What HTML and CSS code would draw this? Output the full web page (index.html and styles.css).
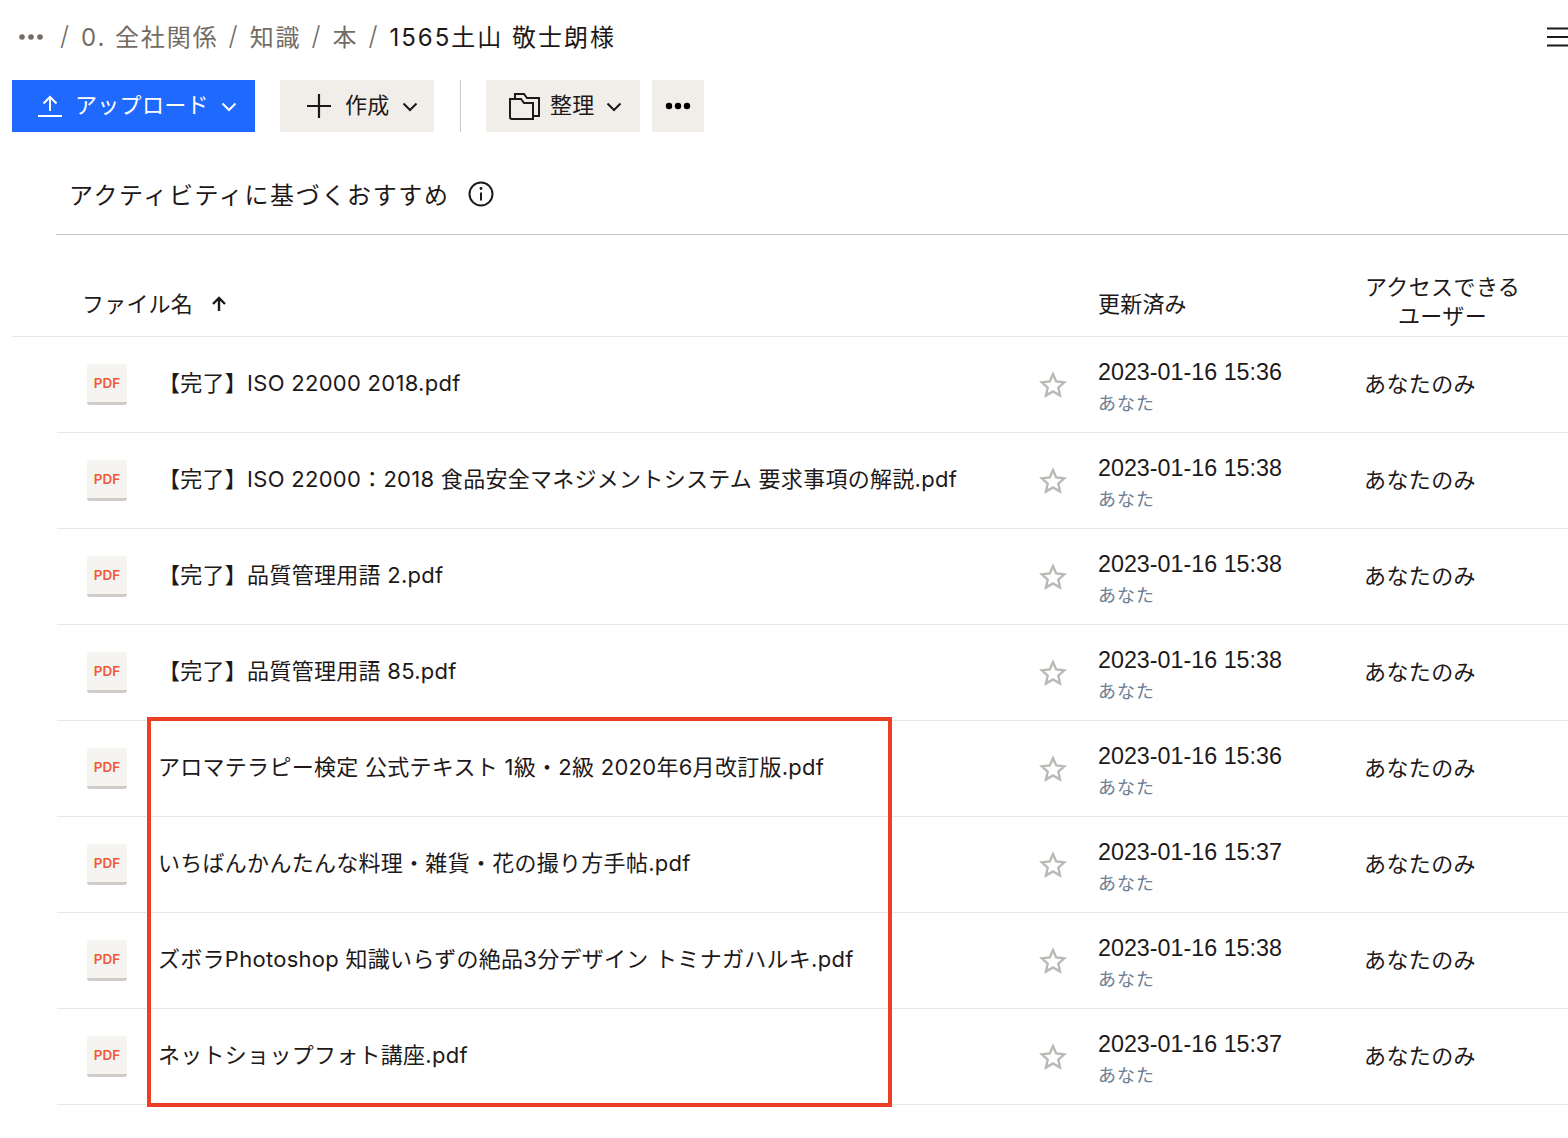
FILE: index.html
```html
<!DOCTYPE html>
<html lang="ja">
<head>
<meta charset="utf-8">
<title>1565土山 敬士朗様</title>
<link rel="stylesheet" href="styles.css">
</head>
<body>
<div class="page">
  <header class="crumbs">
    <svg class="crumb-more" width="28" height="8" viewBox="0 0 28 8"><circle cx="5" cy="4" r="2.800"/><circle cx="14" cy="4" r="2.800"/><circle cx="23" cy="4" r="2.800"/></svg>
    <span class="sep">/</span><span class="crumb">0. 全社関係</span>
    <span class="sep">/</span><span class="crumb">知識</span>
    <span class="sep">/</span><span class="crumb">本</span>
    <span class="sep">/</span><span class="crumb current">1565土山 敬士朗様</span>
    <svg class="menu" width="21" height="20" viewBox="0 0 21 20"><path d="M0 1.500h21M0 10h21M0 18.500h21" stroke="#1e1919" stroke-width="2"/></svg>
  </header>

  <nav class="toolbar">
    <button class="btn primary upload">
      <svg width="26" height="24" viewBox="0 0 26 24" fill="none" stroke="#fff" stroke-width="2"><path d="M13 17V3M6.500 9.500 13 3l6.500 6.500M1 22h24"/></svg>
      <span>アップロード</span>
      <svg class="chev" width="16" height="10" viewBox="0 0 16 10" fill="none" stroke="#fff" stroke-width="2"><path d="m1.500 1.500 6.500 6.500 6.500-6.500"/></svg>
    </button>
    <button class="btn create">
      <svg width="26" height="26" viewBox="0 0 26 26" fill="none" stroke="#1e1919" stroke-width="2.200"><path d="M13 1v24M1 13h24"/></svg>
      <span>作成</span>
      <svg class="chev" width="16" height="10" viewBox="0 0 16 10" fill="none" stroke="#1e1919" stroke-width="2"><path d="m1.500 1.500 6.500 6.500 6.500-6.500"/></svg>
    </button>
    <div class="divider"></div>
    <button class="btn organize">
      <svg width="32" height="28" viewBox="0 0 32 28" fill="none" stroke="#1e1919" stroke-width="2"><path d="M7 7V2h9l3 4h12v18h-6"/><path d="M2 7h11l3 4h9v16H4a2 2 0 0 1-2-2z"/></svg>
      <span>整理</span>
      <svg class="chev" width="16" height="10" viewBox="0 0 16 10" fill="none" stroke="#1e1919" stroke-width="2"><path d="m1.500 1.500 6.500 6.500 6.500-6.500"/></svg>
    </button>
    <button class="btn more">
      <svg width="28" height="8" viewBox="0 0 28 8"><circle cx="5" cy="4" r="3.200"/><circle cx="14" cy="4" r="3.200"/><circle cx="23" cy="4" r="3.200"/></svg>
    </button>
  </nav>

  <section class="suggest">
    <span>アクティビティに基づくおすすめ</span>
    <svg class="info" width="26" height="26" viewBox="0 0 26 26" fill="none" stroke="#1e1919" stroke-width="2"><circle cx="13" cy="13" r="11.500"/><path d="M13 11.500v8"/><circle cx="13" cy="7.500" r="1.400" fill="#1e1919" stroke="none"/></svg>
  </section>

  <div class="thead">
    <div class="th-name">ファイル名
      <svg class="sort" width="16" height="16" viewBox="0 0 16 16" fill="none" stroke="#1e1919" stroke-width="2.400"><path d="M8 15V2M2 8l6-6 6 6"/></svg>
    </div>
    <div class="th-date">更新済み</div>
    <div class="th-access">アクセスできる<br>ユーザー</div>
  </div>

  <main class="rows">
    <div class="row">
      <div class="pdf"><span>PDF</span></div>
      <div class="name">【完了】ISO 22000 2018.pdf</div>
      <svg class="star" width="28" height="28" viewBox="0 0 28 28"><path d="M14 3.200l3.300 7.300 7.900.8-5.900 5.400 1.700 7.800-7-4-7 4 1.700-7.800-5.900-5.400 7.900-.8z"/></svg>
      <div class="date"><div>2023-01-16 15:36</div><div class="who">あなた</div></div>
      <div class="access">あなたのみ</div>
    </div>
    <div class="row">
      <div class="pdf"><span>PDF</span></div>
      <div class="name">【完了】ISO 22000：2018 食品安全マネジメントシステム 要求事項の解説.pdf</div>
      <svg class="star" width="28" height="28" viewBox="0 0 28 28"><path d="M14 3.200l3.300 7.300 7.900.8-5.900 5.400 1.700 7.800-7-4-7 4 1.700-7.800-5.900-5.400 7.900-.8z"/></svg>
      <div class="date"><div>2023-01-16 15:38</div><div class="who">あなた</div></div>
      <div class="access">あなたのみ</div>
    </div>
    <div class="row">
      <div class="pdf"><span>PDF</span></div>
      <div class="name">【完了】品質管理用語 2.pdf</div>
      <svg class="star" width="28" height="28" viewBox="0 0 28 28"><path d="M14 3.200l3.300 7.300 7.900.8-5.900 5.400 1.700 7.800-7-4-7 4 1.700-7.800-5.900-5.400 7.900-.8z"/></svg>
      <div class="date"><div>2023-01-16 15:38</div><div class="who">あなた</div></div>
      <div class="access">あなたのみ</div>
    </div>
    <div class="row">
      <div class="pdf"><span>PDF</span></div>
      <div class="name">【完了】品質管理用語 85.pdf</div>
      <svg class="star" width="28" height="28" viewBox="0 0 28 28"><path d="M14 3.200l3.300 7.300 7.900.8-5.900 5.400 1.700 7.800-7-4-7 4 1.700-7.800-5.900-5.400 7.900-.8z"/></svg>
      <div class="date"><div>2023-01-16 15:38</div><div class="who">あなた</div></div>
      <div class="access">あなたのみ</div>
    </div>
    <div class="row">
      <div class="pdf"><span>PDF</span></div>
      <div class="name">アロマテラピー検定 公式テキスト 1級・2級 2020年6月改訂版.pdf</div>
      <svg class="star" width="28" height="28" viewBox="0 0 28 28"><path d="M14 3.200l3.300 7.300 7.900.8-5.900 5.400 1.700 7.800-7-4-7 4 1.700-7.800-5.900-5.400 7.900-.8z"/></svg>
      <div class="date"><div>2023-01-16 15:36</div><div class="who">あなた</div></div>
      <div class="access">あなたのみ</div>
    </div>
    <div class="row">
      <div class="pdf"><span>PDF</span></div>
      <div class="name">いちばんかんたんな料理・雑貨・花の撮り方手帖.pdf</div>
      <svg class="star" width="28" height="28" viewBox="0 0 28 28"><path d="M14 3.200l3.300 7.300 7.900.8-5.900 5.400 1.700 7.800-7-4-7 4 1.700-7.800-5.900-5.400 7.900-.8z"/></svg>
      <div class="date"><div>2023-01-16 15:37</div><div class="who">あなた</div></div>
      <div class="access">あなたのみ</div>
    </div>
    <div class="row">
      <div class="pdf"><span>PDF</span></div>
      <div class="name">ズボラPhotoshop 知識いらずの絶品3分デザイン トミナガハルキ.pdf</div>
      <svg class="star" width="28" height="28" viewBox="0 0 28 28"><path d="M14 3.200l3.300 7.300 7.900.8-5.900 5.400 1.700 7.800-7-4-7 4 1.700-7.800-5.900-5.400 7.900-.8z"/></svg>
      <div class="date"><div>2023-01-16 15:38</div><div class="who">あなた</div></div>
      <div class="access">あなたのみ</div>
    </div>
    <div class="row">
      <div class="pdf"><span>PDF</span></div>
      <div class="name">ネットショップフォト講座.pdf</div>
      <svg class="star" width="28" height="28" viewBox="0 0 28 28"><path d="M14 3.200l3.300 7.300 7.900.8-5.900 5.400 1.700 7.800-7-4-7 4 1.700-7.800-5.900-5.400 7.900-.8z"/></svg>
      <div class="date"><div>2023-01-16 15:37</div><div class="who">あなた</div></div>
      <div class="access">あなたのみ</div>
    </div>
  </main>

  <div class="highlight"></div>
</div>
</body>
</html>
```

FILE: styles.css
```css
* { box-sizing: border-box; }
html, body { margin: 0; padding: 0; background: #fff; }
body {
  font-family: "Liberation Sans", "Noto Sans CJK JP", sans-serif;
  color: #1e1919;
  font-size: 22px;
}
.page { position: relative; width: 1568px; height: 1138px; overflow: hidden; }

.crumbs {
  height: 74px;
  display: flex;
  align-items: center;
  padding-left: 17px;
  font-family: "Inter", "Noto Sans CJK JP", sans-serif;
  font-size: 24px;
  color: #736c64;
  letter-spacing: 1.9px;
}
.crumb-more { fill: #736c64; margin-right: 15px; }
.sep { margin-right: 12px; font-size: 26px; font-weight: 300; padding-bottom: 3px; letter-spacing: 0; }
.crumb { margin-right: 10px; padding-bottom: 4px; }
.crumb.current { color: #1e1919; letter-spacing: 2px; }
.menu { margin-left: auto; flex: none; }

.toolbar {
  margin-top: 6px;
  height: 52px;
  display: flex;
  align-items: stretch;
  padding-left: 12px;
}
.btn {
  border: 0;
  margin: 0;
  padding: 0;
  font: inherit;
  color: inherit;
  background: #f1eeea;
  display: flex;
  align-items: center;
  justify-content: flex-start;
}
.btn span { padding-bottom: 6px; letter-spacing: .3px; }
.btn.primary { background: #1f69ff; color: #fff; }
.upload { width: 243px; padding-left: 25px; gap: 12px; }
.create { width: 154px; margin-left: 25px; padding-left: 26px; gap: 13px; }
.divider { width: 1px; background: #cfcac4; margin: 0 25px 0 26px; }
.organize { width: 154px; padding-left: 22px; gap: 10px; }
.more { width: 52px; margin-left: 12px; justify-content: center; }
.create .chev { margin-left: -1px; }
.organize .chev { margin-left: 1px; }
.chev { margin-top: 1px; }

.suggest {
  margin-left: 56px;
  height: 103px;
  border-bottom: 1px solid #c9c6c1;
  display: flex;
  align-items: center;
  gap: 18px;
  padding: 42px 0 22px 13px;
  font-size: 24px;
  letter-spacing: 1.650px;
}
.info { margin-top: 2px; }

.thead {
  margin: 33px 0 0 12px;
  height: 69px;
  border-bottom: 1px solid #e9e6e1;
  display: grid;
  grid-template-columns: 1016px 267px 155px;
  grid-template-rows: 1fr;
  padding-left: 70px;
  align-items: center;
  letter-spacing: .2px;
}
.th-name { display: flex; align-items: center; gap: 18px; }
.sort { margin-top: 3px; }
.th-access { text-align: center; line-height: 29px; letter-spacing: .4px; white-space: nowrap; }

.row {
  margin-left: 57px;
  height: 96px;
  border-bottom: 1px solid #e9e6e1;
  display: grid;
  grid-template-columns: 71px 881px 59px 267px 1fr;
  align-items: center;
  padding-left: 30px;
}
.pdf {
  width: 40px;
  height: 41px;
  border-radius: 3px;
  background: #f6f4f1;
  border-bottom: 3px solid #cfccc7;
  display: flex;
  align-items: center;
  justify-content: center;
}
.pdf span {
  color: #f0593a;
  font-size: 13.500px;
  font-weight: 600;
  font-family: "Inter", "Liberation Sans", sans-serif;
}
.name {
  font-family: "Inter", "Noto Sans CJK JP", sans-serif;
  letter-spacing: .28px;
  white-space: nowrap;
  padding-bottom: 7px;
}
.star { fill: none; stroke: #bbb9b3; stroke-width: 2.400; margin-top: 1px; }
.date { line-height: 32px; font-size: 23.300px; padding-top: 6px; }
.who { font-size: 18px; line-height: 30px; color: #6b7d91; letter-spacing: 1px; margin-top: 1px; }
.access { letter-spacing: .4px; padding-bottom: 6px; margin-left: -1px; }

.highlight {
  position: absolute;
  left: 147px;
  top: 717px;
  width: 745px;
  height: 390px;
  border: 4px solid #ee3f26;
  pointer-events: none;
}
```
